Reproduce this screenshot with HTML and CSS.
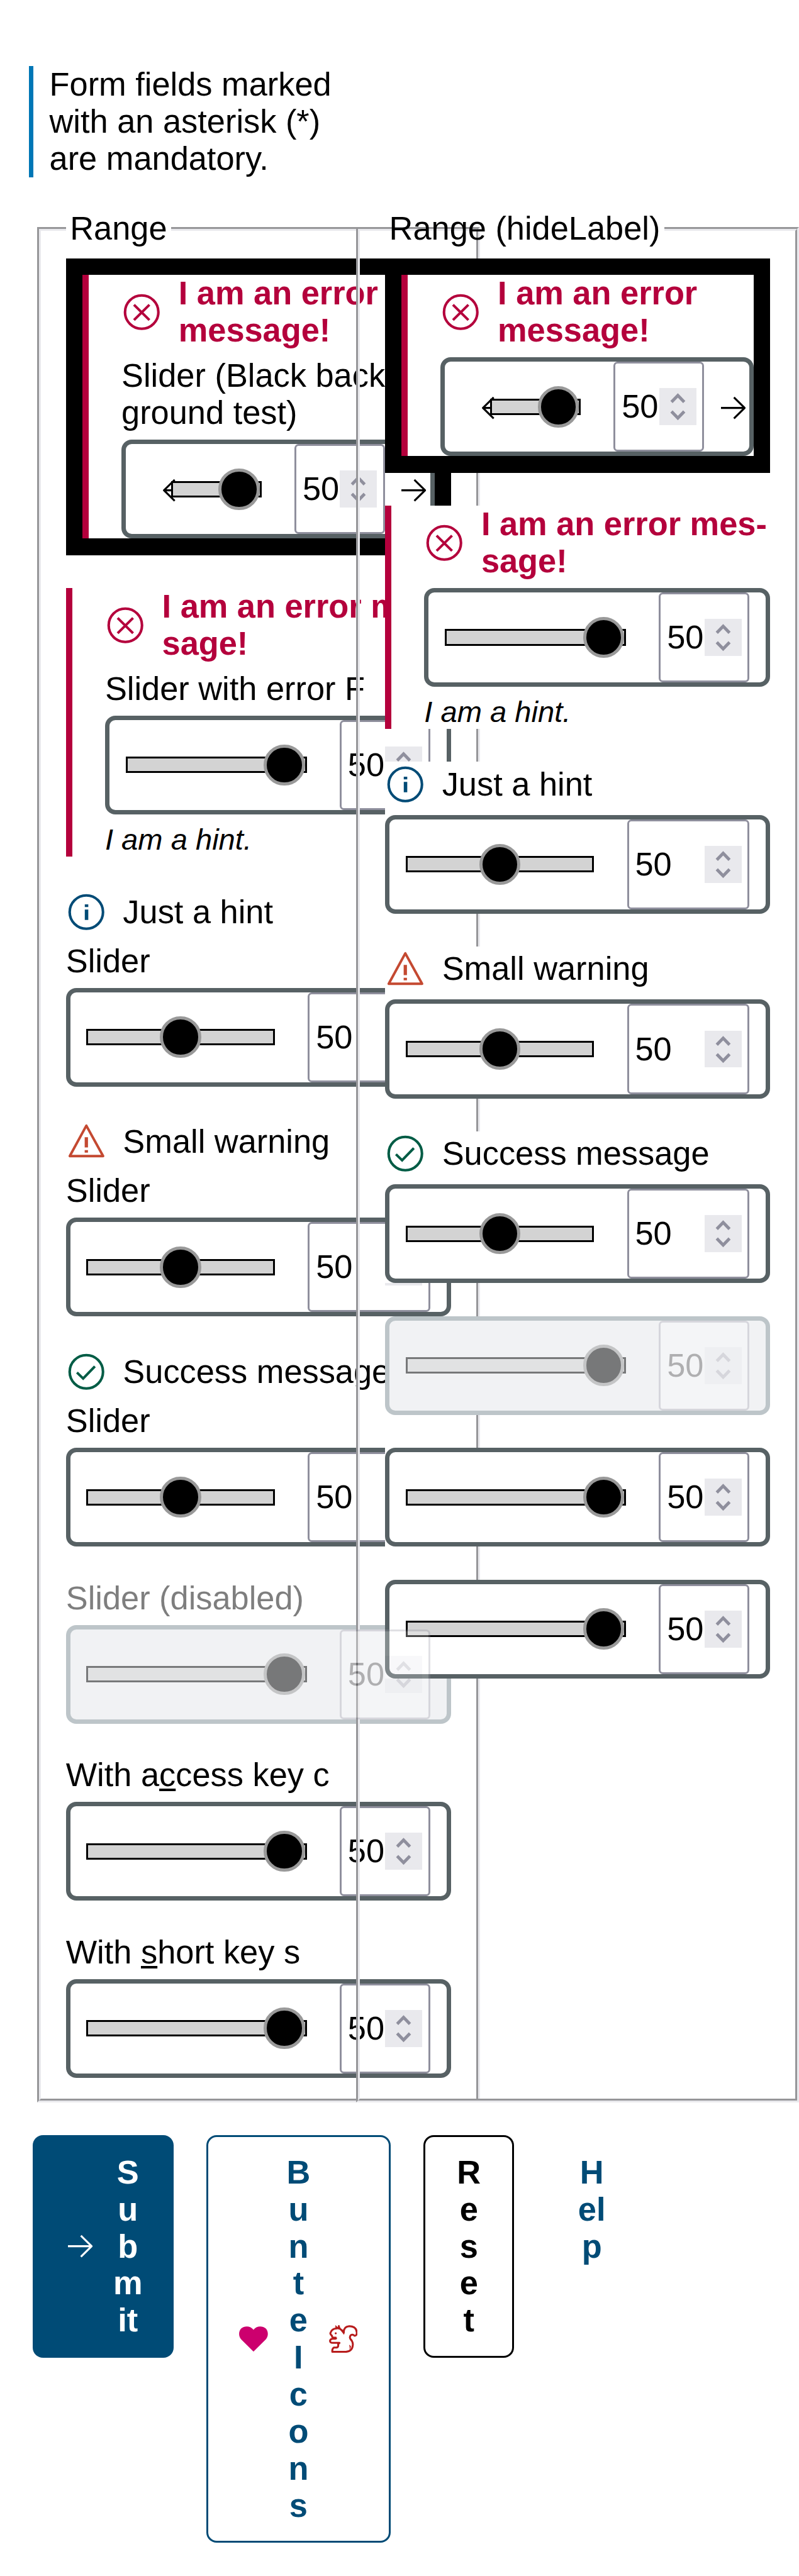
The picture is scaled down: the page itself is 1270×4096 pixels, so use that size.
FILE: index.html
```html
<!DOCTYPE html>
<html lang="en">
<head>
<meta charset="utf-8">
<title>Input range</title>
<link rel="stylesheet" href="styles.css">
</head>
<body>
<svg class="sprite" aria-hidden="true">
  <symbol id="error" viewBox="0 0 19.7 19.7"><g fill="none" stroke="currentColor" stroke-width="1.25"><circle cx="9.85" cy="9.85" r="8.1"/><path d="M6.1 6.3l7.5 7.4M13.6 6.3l-7.5 7.4"/></g></symbol>
  <symbol id="info" viewBox="0 0 19.7 19.7"><circle cx="9.85" cy="9.85" r="8.1" fill="none" stroke="currentColor" stroke-width="1.25"/><path fill="currentColor" d="M9.1 6.1h1.7v1.3H9.1zM9.1 8.6h1.7v5.1H9.1z"/></symbol>
  <symbol id="warning" viewBox="0 0 19.7 19.7"><path d="M9.85 2.1L1.8 16.9h16.2z" fill="none" stroke="currentColor" stroke-width="1.2" stroke-linejoin="round"/><path fill="currentColor" d="M9.05 7.7h1.6v5H9.05zM9.05 14h1.6v1.2H9.05z"/></symbol>
  <symbol id="success" viewBox="0 0 19.7 19.7"><g fill="none" stroke="currentColor" stroke-width="1.25"><circle cx="9.85" cy="9.85" r="8.1"/><path d="M5.3 10.2l3 2.9 5.7-5.9"/></g></symbol>
  <symbol id="arrow" viewBox="0 0 12 12"><path d="M0 6h11.5M6.3 .9L11.5 6 6.3 11.1" fill="none" stroke="currentColor" stroke-width=".95" stroke-linejoin="round"/></symbol>
  <symbol id="spin" viewBox="0 0 18 18"><path d="M5.9 6.8L9 3.6l3.1 3.2M5.9 11.4L9 14.6l3.1-3.2" fill="none" stroke="#8f8f9d" stroke-width="1.5"/></symbol>
</svg>

<main class="page">
  <p class="note">Form fields marked<br>with an asterisk (*)<br>are mandatory.</p>

  <div class="sets">
    <fieldset class="set">
      <legend>Range</legend>
      <div class="fields">
        <div class="black">
          <div class="field invalid">
            <div class="msg error"><svg><use href="#error"/></svg><span>I am an error<br>message!</span></div>
            <div class="label">Slider (Black back-<br>ground test)</div>
            <div class="slider"><svg class="arrow back"><use href="#arrow"/></svg><div class="track"><i></i></div><div class="number"><span>50</span><svg><use href="#spin"/></svg></div><svg class="arrow fwd"><use href="#arrow"/></svg></div>
          </div>
        </div>
        <div class="field invalid">
          <div class="msg error"><svg><use href="#error"/></svg><span>I am an error mes-<br>sage!</span></div>
          <div class="label">Slider with error F</div>
          <div class="slider"><div class="track"><i></i></div><div class="number"><span>50</span><svg><use href="#spin"/></svg></div></div>
          <div class="hint">I am a hint.</div>
        </div>
        <div class="field">
          <div class="msg info"><svg><use href="#info"/></svg><span>Just a hint</span></div>
          <div class="label">Slider</div>
          <div class="slider mid"><div class="track"><i></i></div><div class="number"><span>50</span><svg><use href="#spin"/></svg></div></div>
        </div>
        <div class="field">
          <div class="msg warning"><svg><use href="#warning"/></svg><span>Small warning</span></div>
          <div class="label">Slider</div>
          <div class="slider mid"><div class="track"><i></i></div><div class="number"><span>50</span><svg><use href="#spin"/></svg></div></div>
        </div>
        <div class="field">
          <div class="msg success"><svg><use href="#success"/></svg><span>Success message</span></div>
          <div class="label">Slider</div>
          <div class="slider mid"><div class="track"><i></i></div><div class="number"><span>50</span><svg><use href="#spin"/></svg></div></div>
        </div>
        <div class="field disabled">
          <div class="label">Slider (disabled)</div>
          <div class="slider"><div class="track"><i></i></div><div class="number"><span>50</span><svg><use href="#spin"/></svg></div></div>
        </div>
        <div class="field">
          <div class="label">With a<u>c</u>cess key c</div>
          <div class="slider"><div class="track"><i></i></div><div class="number"><span>50</span><svg><use href="#spin"/></svg></div></div>
        </div>
        <div class="field">
          <div class="label">With <u>s</u>hort key s</div>
          <div class="slider"><div class="track"><i></i></div><div class="number"><span>50</span><svg><use href="#spin"/></svg></div></div>
        </div>
      </div>
    </fieldset>

    <fieldset class="set">
      <legend>Range (hideLabel)</legend>
      <div class="fields">
        <div class="black">
          <div class="field invalid">
            <div class="msg error"><svg><use href="#error"/></svg><span>I am an error<br>message!</span></div>
            <div class="slider"><svg class="arrow back"><use href="#arrow"/></svg><div class="track"><i></i></div><div class="number"><span>50</span><svg><use href="#spin"/></svg></div><svg class="arrow fwd"><use href="#arrow"/></svg></div>
          </div>
        </div>
        <div class="field invalid">
          <div class="msg error"><svg><use href="#error"/></svg><span>I am an error mes-<br>sage!</span></div>
          <div class="slider"><div class="track"><i></i></div><div class="number"><span>50</span><svg><use href="#spin"/></svg></div></div>
          <div class="hint">I am a hint.</div>
        </div>
        <div class="field">
          <div class="msg info"><svg><use href="#info"/></svg><span>Just a hint</span></div>
          <div class="slider mid"><div class="track"><i></i></div><div class="number"><span>50</span><svg><use href="#spin"/></svg></div></div>
        </div>
        <div class="field">
          <div class="msg warning"><svg><use href="#warning"/></svg><span>Small warning</span></div>
          <div class="slider mid"><div class="track"><i></i></div><div class="number"><span>50</span><svg><use href="#spin"/></svg></div></div>
        </div>
        <div class="field">
          <div class="msg success"><svg><use href="#success"/></svg><span>Success message</span></div>
          <div class="slider mid"><div class="track"><i></i></div><div class="number"><span>50</span><svg><use href="#spin"/></svg></div></div>
        </div>
        <div class="field disabled">
          <div class="slider"><div class="track"><i></i></div><div class="number"><span>50</span><svg><use href="#spin"/></svg></div></div>
        </div>
        <div class="field">
          <div class="slider"><div class="track"><i></i></div><div class="number"><span>50</span><svg><use href="#spin"/></svg></div></div>
        </div>
        <div class="field">
          <div class="slider"><div class="track"><i></i></div><div class="number"><span>50</span><svg><use href="#spin"/></svg></div></div>
        </div>
      </div>
    </fieldset>
  </div>

  <div class="buttons">
    <div class="btn primary"><svg class="arrow"><use href="#arrow"/></svg><span>S<br>u<br>b<br>m<br>it</span></div>
    <div class="btn secondary">
      <svg class="heart" viewBox="0 0 168 147"><path fill="#cc006e" d="M84 147L13 77C-4 58-4 28 13 12 32-5 67-4 84 20 101-4 136-5 155 12c17 16 17 46 0 65z"/></svg>
      <span>B<br>u<br>n<br>t<br>e<br>I<br>c<br>o<br>n<br>s</span>
      <svg class="squirrel" viewBox="0 0 168 162"><g fill="none" stroke="#b71c1c" stroke-width="11" stroke-linejoin="round"><path d="M61 19Q74 28 86 45Q84 8 118 6Q160 7 162 44Q162 63 148 62Q138 52 127 59Q118 69 124 80Q138 94 139 112Q138 154 98 156H19Q17 138 28 131H46Q56 127 53 111L61 104H22Q4 103 6 90Q10 80 22 80H38"/><path d="M43 73H28Q16 73 17 62Q4 52 9 44Q17 20 43 20Q50 17 62 21"/></g><path fill="#b71c1c" d="M37 21L37 0 50 12 54 0 60 0 67 18 60 24zM24 73H48L43 84H37L26 78zM70 22L90 34 88 58 78 43zM117 115Q125 118 128 126L120 145Q122 128 117 115z"/><circle cx="39" cy="48" r="6" fill="#b71c1c"/></svg>
    </div>
    <div class="btn reset"><span>R<br>e<br>s<br>e<br>t</span></div>
    <div class="btn ghost"><span>H<br>el<br>p</span></div>
  </div>
</main>
</body>
</html>
```
FILE: styles.css
```css
/* 1rem = ten layout units of the magnified page; borders are whole pixels */
html { font-size: 32.732px; background: #fff; }
body { margin: 0; font-family: "Liberation Sans", Arial, sans-serif; color: #000; }
.sprite { display: none; }
.page { padding: 3.215rem 0 1.6rem 1.6rem; font-size: 1.6rem; line-height: 1.8rem; white-space: nowrap; }
.page * { box-sizing: border-box; }

.note { margin: 0 0 1.6rem -.2rem; border-left: 7px solid #0077b6; padding-left: calc(1rem - 7px); }

.sets { display: grid; grid-template-columns: 15.5rem 21.5rem; margin-left: .2rem; }
.set { width: 21.5rem; min-width: 0; margin: 0; padding: .55rem calc(1.4rem - 6px) calc(1.2rem - 6px); border: 6px groove #e9e9ed; }
.set legend { height: 1.8rem; padding: 0 .2rem; }
.fields { display: grid; gap: 1.6rem; grid-template-columns: 18.7rem; }
.black { background: #000; padding: .8rem; }
.field { display: flex; flex-direction: column; gap: .4rem; background: #fff; }
.invalid { border-left: 10px solid #b4003c; padding-left: calc(1.9rem - 10px); }

.msg { display: flex; align-items: center; gap: .8rem; min-height: 2.175rem; }
.msg svg { width: 1.97rem; height: 1.97rem; flex: none; }
.error { color: #b4003c; font-weight: 700; }
.info svg { color: #004b76; }
.warning svg { color: #c44931; }
.success svg { color: #005c45; }
.label u { text-decoration-thickness: .12rem; text-underline-offset: .11rem; text-decoration-skip-ink: none; }
.hint { font-size: 1.44rem; line-height: 1.65rem; font-style: italic; }

.slider { display: flex; align-items: center; height: 4.8rem; padding: 0 calc(1rem - 7px); border: 7px solid #576164; border-radius: .5rem; background: #fff; }
.track { flex: 1; height: .8rem; border: .1rem solid #000; background: #d3d3d3; display: flex; align-items: center; justify-content: flex-end; }
.track i { flex: none; width: 2rem; height: 2rem; border-radius: 50%; border: 5px solid #999; background: #000; }
.mid .track { justify-content: center; }
.number { display: flex; align-items: center; justify-content: space-between; width: 4.4rem; height: 100%; margin-left: 1.6rem; padding: 0 .3rem; border: .1rem solid #8f8f9d; border-radius: .2rem; background: #fff; }
.mid .number { width: 5.95rem; }
.number svg { width: 1.8rem; height: 1.8rem; background: #e9e9ed; flex: none; }
.arrow { width: 1.2rem; height: 1.2rem; flex: none; overflow: visible; }
.back { margin: .1rem -.8rem 0 1rem; transform: scaleX(-1); }
.back + .track { z-index: 0; }
.fwd { margin: .1rem -.6rem 0 .8rem; }

.disabled .label { opacity: .5; }
.disabled .slider { background: #f1f2f4; border-color: #bdc5c9; }
.disabled .track { opacity: .5; }
.disabled .number { opacity: .27; }

.buttons { display: flex; align-items: flex-start; gap: 1.6rem; margin-top: 1.6rem; font-weight: 700; text-align: center; color: #004b76; }
.btn { display: flex; align-items: center; justify-content: center; padding: calc(.9rem - 3px) 1.3rem; border: 3px solid transparent; border-radius: .5rem; }
.primary { width: 6.82rem; gap: 1rem; background: #004b76; color: #fff; }
.primary .arrow { margin-left: .2rem; }
.secondary { width: 8.95rem; gap: .79rem; border-color: #004b76; }
.secondary span { width: 1.37rem; }
.reset { width: 4.4rem; border-color: #000; color: #000; }
.ghost { width: 4.34rem; }
.heart { width: 1.4rem; height: 1.23rem; }
.squirrel { width: 1.4rem; height: 1.35rem; }
```
